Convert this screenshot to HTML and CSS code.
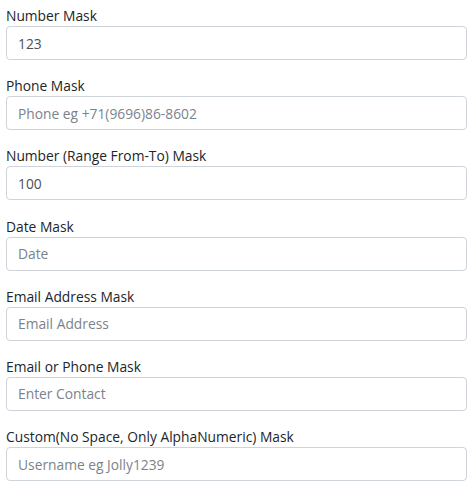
FILE: index.html
```html
<!DOCTYPE html>
<html>
<head>
<meta charset="utf-8">
<link rel="stylesheet" href="styles.css">
</head>
<body>
<form class="form">
  <div class="group">
    <label class="label">Number Mask</label>
    <input class="input" type="text" value="123">
  </div>
  <div class="group">
    <label class="label">Phone Mask</label>
    <input class="input" type="text" placeholder="Phone eg +71(9696)86-8602">
  </div>
  <div class="group">
    <label class="label">Number (Range From-To) Mask</label>
    <input class="input" type="text" value="100">
  </div>
  <div class="group">
    <label class="label">Date Mask</label>
    <input class="input" type="text" placeholder="Date">
  </div>
  <div class="group">
    <label class="label">Email Address Mask</label>
    <input class="input" type="text" placeholder="Email Address">
  </div>
  <div class="group">
    <label class="label">Email or Phone Mask</label>
    <input class="input" type="text" placeholder="Enter Contact">
  </div>
  <div class="group">
    <label class="label">Custom(No Space, Only AlphaNumeric) Mask</label>
    <input class="input" type="text" placeholder="Username eg Jolly1239">
  </div>
</form>
</body>
</html>
```
FILE: styles.css
```css
html, body {
  margin: 0;
  padding: 0;
  background: #ffffff;
}
body {
  font-family: "Open Sans", "Noto Sans", sans-serif;
  font-size: 13.8px;
  color: #212529;
}
.form {
  display: flex;
  flex-direction: column;
  gap: 15.2px;
  padding: 5px 7px 0 6px;
}
.group {
  display: flex;
  flex-direction: column;
}
.label {
  display: block;
  line-height: 21px;
  margin-bottom: 0;
}
.input {
  box-sizing: border-box;
  height: 34px;
  width: 100%;
  margin: 0;
  padding: 0 11px;
  border: 1px solid #ced4da;
  border-radius: 4px;
  font-family: inherit;
  font-size: 13.8px;
  color: #495057;
  background: #ffffff;
  outline: none;
}
.input::placeholder {
  color: #7b838a;
  opacity: 1;
}
```
